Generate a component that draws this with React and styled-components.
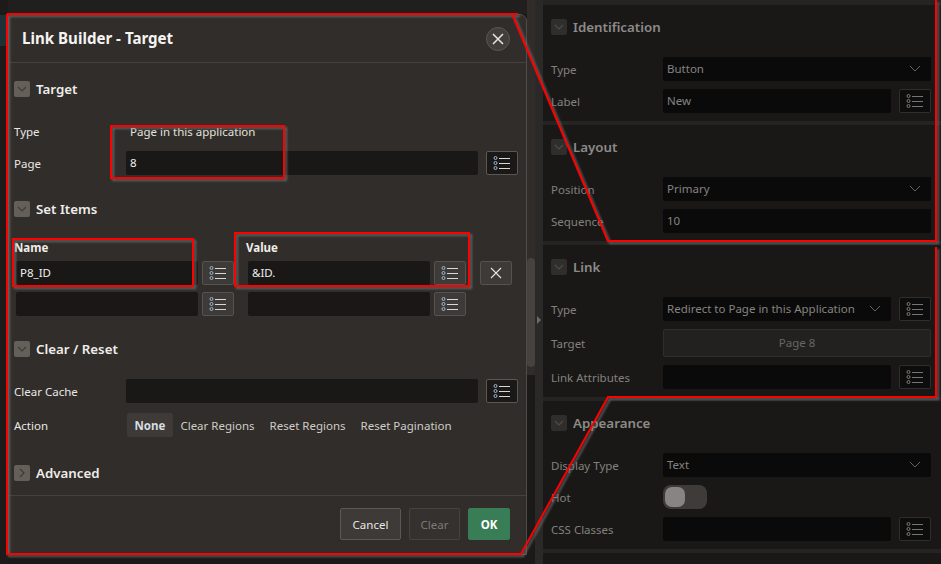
import React from "react";
import styled, { createGlobalStyle } from "styled-components";

const Global = createGlobalStyle`
  html, body { margin: 0; padding: 0; background: #1b1a19; overflow: hidden; }
  * { box-sizing: border-box; }
  #root { width: 941px; height: 564px; }
`;

const Page = styled.div`
  position: relative;
  display: flex;
  width: 941px;
  height: 564px;
  overflow: hidden;
  font-family: "Noto Sans", "Open Sans", sans-serif;
  font-size: 11.5px;
`;

const Rail = styled.div`
  width: 8px;
  display: flex;
  flex-direction: column;
  background: #1c1b1a;
`;
const RailTeal = styled.div`
  height: 31px;
  margin-top: 15px;
  background: #1d3136;
`;

const Workspace = styled.div`
  width: 519px;
  display: flex;
  flex-direction: column;
  padding-top: 14px;
  background: linear-gradient(#211f1e 14px, #1b1a19 14px);
`;

const Modal = styled.div`
  width: 519px;
  height: 541px;
  display: flex;
  flex-direction: column;
  background: #312d2a;
  border: 1px solid #4f4c49;
  border-top-right-radius: 7px;
  color: #f1efed;
`;
const ModalHeader = styled.header`
  height: 48px;
  flex: none;
  display: flex;
  align-items: center;
  justify-content: space-between;
  padding: 0 16px 0 13px;
  border-bottom: 1px solid #45413e;
`;
const ModalTitle = styled.h1`
  margin: 0 0 1px;
  font-size: 15.1px;
  font-weight: 700;
  color: #f5f4f2;
`;
const CloseButton = styled.div`
  width: 24px;
  height: 24px;
  border-radius: 50%;
  display: flex;
  align-items: center;
  justify-content: center;
  background: #423e3b;
  border: 1px solid #5a5653;
`;
const ModalBody = styled.div`
  flex: 1;
  display: flex;
  flex-direction: column;
  padding: 18px 8px 0 5px;
`;
const Block = styled.section`
  display: flex;
  flex-direction: column;
  margin-bottom: ${(p) => p.$after || 0}px;
`;
const Heading = styled.div`
  display: flex;
  align-items: center;
  gap: 6px;
  height: 16px;
  margin-bottom: ${(p) => (p.$flush ? 0 : 22)}px;
  font-size: 13.3px;
  font-weight: 600;
  color: ${(p) => (p.$dim ? "#8d8b88" : "#efedeb")};
`;
const Toggler = styled.span`
  width: 16px;
  height: 16px;
  flex: none;
  display: flex;
  align-items: center;
  justify-content: center;
  border-radius: 2px;
  background: ${(p) => (p.$dim ? "#302e2c" : "#655f5a")};
  color: ${(p) => (p.$dim ? "#4e4b48" : "#3f3b38")};
`;
const Stack = styled.div`
  display: flex;
  flex-direction: column;
  gap: 8px;
`;
const Field = styled.div`
  display: flex;
  align-items: center;
  height: 24px;
`;
const ActionField = styled(Field)`
  margin-top: 2px;
`;
const FieldLabel = styled.div`
  width: 112px;
  flex: none;
  color: #e9e7e5;
`;
const ReadOnly = styled.div`
  padding: 1px 0 0 4px;
  color: #e4e2df;
`;
const Controls = styled.div`
  flex: 1;
  display: flex;
  gap: 8px;
`;
const Input = styled.div`
  flex: 1;
  min-width: 0;
  height: 24px;
  display: flex;
  align-items: center;
  padding: 0 4px 1px;
  border-radius: 2px;
  background: #191817;
  color: #f0eeec;
`;
const PopButton = styled.div`
  width: 32px;
  height: 24px;
  flex: none;
  display: flex;
  align-items: center;
  justify-content: center;
  border-radius: 2px;
  border: 1px solid ${(p) => (p.$dark ? "#5b5854" : "#56524f")};
  background: ${(p) => (p.$dark ? "#1a1918" : "#3d3a37")};
`;
const ItemsHead = styled.div`
  display: flex;
  gap: 14px;
  height: 22px;
  padding-top: 1px;
  font-weight: 700;
  color: #efedeb;
`;
const ItemsRows = styled.div`
  display: flex;
  flex-direction: column;
  gap: 7px;
  padding-left: 2px;
`;
const ItemsRow = styled.div`
  display: flex;
  gap: 14px;
`;
const Pair = styled.div`
  width: 218px;
  display: flex;
  gap: 4px;
`;
const ItemTitle = styled.div`
  width: 218px;
`;
const ActionSet = styled.div`
  display: flex;
  margin-left: 1px;
`;
const ActionOption = styled.div`
  height: 24px;
  display: flex;
  align-items: center;
  padding: 0 7.5px;
  border-radius: 2px;
  font-weight: ${(p) => (p.$on ? 700 : 400)};
  background: ${(p) => (p.$on ? "#3d3a37" : "transparent")};
  color: ${(p) => (p.$on ? "#d9dde2" : "#cfccc9")};
`;
const ModalFooter = styled.footer`
  flex: none;
  display: flex;
  justify-content: flex-end;
  gap: 8px;
  height: 59px;
  padding: 12px 16px 0 0;
  border-top: 1px solid #45413e;
`;
const FooterButton = styled.div`
  width: ${(p) => p.$w}px;
  height: 32px;
  display: flex;
  align-items: center;
  justify-content: center;
  border-radius: 2px;
  border: 1px solid ${(p) => p.$line};
  background: ${(p) => p.$bg};
  color: ${(p) => p.$fg};
  font-weight: ${(p) => (p.$bold ? 700 : 400)};
`;

const Gutter = styled.div`
  position: relative;
  width: 16px;
  display: flex;
  background: #2b2927;
`;
const GutterLeft = styled.div`
  width: 8px;
  background: linear-gradient(#2f2c29 375px, #1b1a19 375px);
`;
const Scrollbar = styled.div`
  position: absolute;
  left: 0;
  top: 258px;
  width: 8px;
  height: 109px;
  border-radius: 4px;
  background: #45423f;
`;
const SplitArrow = styled.div`
  position: absolute;
  left: 10px;
  top: 316px;
  border-left: 4px solid #6c6966;
  border-top: 4px solid transparent;
  border-bottom: 4px solid transparent;
`;

const Panel = styled.aside`
  width: 398px;
  display: flex;
  flex-direction: column;
  padding-top: 5px;
  background: #252422;
  color: #8a8885;
`;
const PanelSection = styled.section`
  flex: ${(p) => (p.$last ? 1 : "none")};
  padding: 14px 10px 8px 8px;
  margin-bottom: ${(p) => (p.$last ? 0 : 4)}px;
  background: #191817;
`;
const PanelLabel = styled.div`
  width: 112px;
  flex: none;
  color: #83817e;
`;
const PanelInput = styled.div`
  flex: 1;
  min-width: 0;
  height: 24px;
  display: flex;
  align-items: center;
  justify-content: space-between;
  padding: 0 9px 1px 4px;
  border-radius: 2px;
  background: #0b0a0a;
  color: #858380;
`;
const PanelPop = styled.div`
  width: 32px;
  height: 24px;
  flex: none;
  display: flex;
  align-items: center;
  justify-content: center;
  border-radius: 2px;
  border: 1px solid #2f2e2c;
  background: #0e0d0d;
`;
const LinkButton = styled.div`
  flex: 1;
  height: 28px;
  display: flex;
  align-items: center;
  justify-content: center;
  padding-bottom: 1px;
  border-radius: 2px;
  border: 1px solid #2f2e2c;
  background: #222120;
  color: #686663;
`;
const TallField = styled(Field)`
  height: 28px;
`;
const Switch = styled.div`
  width: 44px;
  height: 24px;
  padding: 2px;
  border-radius: 8px;
  background: #3f3b38;
`;
const Knob = styled.div`
  width: 20px;
  height: 20px;
  border-radius: 7px;
  background: #868584;
`;
const Annotations = styled.svg`
  position: absolute;
  inset: 0;
  width: 941px;
  height: 564px;
  pointer-events: none;
  filter: drop-shadow(2px 2px 1px rgba(125, 125, 125, 0.7));
`;

const Chevron = ({ dir = "down" }) => (
  <svg width="12" height="12" viewBox="0 0 12 12" fill="none" stroke="currentColor" strokeWidth="1.2">
    <path d={dir === "down" ? "M2 4l4 4 4-4" : "M4 2l4 4-4 4"} />
  </svg>
);
const SelectChevron = () => (
  <svg width="14" height="8" viewBox="0 0 14 8" fill="none" stroke="#64625f" strokeWidth="1">
    <path d="M2 1l5 5 5-5" />
  </svg>
);
const ListIcon = ({ dim }) => {
  const line = dim ? "#777572" : "#d8d8d8";
  const dot = dim ? "#7f7d7a" : "#9db8d4";
  return (
    <svg width="18" height="14" viewBox="0 0 18 14" fill="none">
      {[2, 7, 12].map((y) => (
        <g key={y}>
          <circle cx="2.5" cy={y} r="1.5" stroke={dot} strokeWidth="1" />
          <path d={`M6 ${y}.5H17`} stroke={line} strokeWidth="1" />
        </g>
      ))}
    </svg>
  );
};
const Cross = ({ size, weight = 1.1 }) => (
  <svg width={size} height={size} viewBox="0 0 12 12" fill="none" stroke="#e8e6e4" strokeWidth={weight}>
    <path d="M1 1l10 10M11 1L1 11" />
  </svg>
);

const ModalHeading = ({ children, closed }) => (
  <Heading $flush={closed}>
    <Toggler><Chevron dir={closed ? "right" : "down"} /></Toggler>
    {children}
  </Heading>
);
const PanelHeading = ({ children }) => (
  <Heading $dim>
    <Toggler $dim><Chevron /></Toggler>
    {children}
  </Heading>
);
const PF = ({ label, children }) => (
  <Field>
    <PanelLabel>{label}</PanelLabel>
    <Controls>{children}</Controls>
  </Field>
);
const Pop = () => <PanelPop><ListIcon dim /></PanelPop>;

export default function App() {
  return (
    <Page>
      <Global />
      <Rail><RailTeal /></Rail>
      <Workspace>
        <Modal>
          <ModalHeader>
            <ModalTitle>Link Builder - Target</ModalTitle>
            <CloseButton><Cross size={12} weight={1.5} /></CloseButton>
          </ModalHeader>
          <ModalBody>
            <Block $after={26}>
              <ModalHeading>Target</ModalHeading>
              <Stack>
                <Field><FieldLabel>Type</FieldLabel><ReadOnly>Page in this application</ReadOnly></Field>
                <Field>
                  <FieldLabel>Page</FieldLabel>
                  <Controls>
                    <Input>8</Input>
                    <PopButton $dark><ListIcon /></PopButton>
                  </Controls>
                </Field>
              </Stack>
            </Block>
            <Block $after={25}>
              <ModalHeading>Set Items</ModalHeading>
              <ItemsHead>
                <ItemTitle>Name</ItemTitle>
                <ItemTitle>Value</ItemTitle>
              </ItemsHead>
              <ItemsRows>
                <ItemsRow>
                  <Pair><Input>P8_ID</Input><PopButton><ListIcon /></PopButton></Pair>
                  <Pair><Input>&amp;ID.</Input><PopButton><ListIcon /></PopButton></Pair>
                  <PopButton><Cross size={12} /></PopButton>
                </ItemsRow>
                <ItemsRow>
                  <Pair><Input /><PopButton><ListIcon /></PopButton></Pair>
                  <Pair><Input /><PopButton><ListIcon /></PopButton></Pair>
                </ItemsRow>
              </ItemsRows>
            </Block>
            <Block $after={28}>
              <ModalHeading>Clear / Reset</ModalHeading>
              <Stack>
                <Field>
                  <FieldLabel>Clear Cache</FieldLabel>
                  <Controls>
                    <Input />
                    <PopButton $dark><ListIcon /></PopButton>
                  </Controls>
                </Field>
                <ActionField>
                  <FieldLabel>Action</FieldLabel>
                  <ActionSet>
                    <ActionOption $on>None</ActionOption>
                    <ActionOption>Clear Regions</ActionOption>
                    <ActionOption>Reset Regions</ActionOption>
                    <ActionOption>Reset Pagination</ActionOption>
                  </ActionSet>
                </ActionField>
              </Stack>
            </Block>
            <ModalHeading closed>Advanced</ModalHeading>
          </ModalBody>
          <ModalFooter>
            <FooterButton $w={61} $line="#5c5955" $bg="#3d3a37" $fg="#e8e6e4">Cancel</FooterButton>
            <FooterButton $w={51} $line="#45423f" $bg="#34312e" $fg="#7d7a77">Clear</FooterButton>
            <FooterButton $w={42} $line="#397d56" $bg="#397d56" $fg="#ffffff" $bold>OK</FooterButton>
          </ModalFooter>
        </Modal>
      </Workspace>
      <Gutter>
        <GutterLeft />
        <Scrollbar />
        <SplitArrow />
      </Gutter>
      <Panel>
        <PanelSection>
          <PanelHeading>Identification</PanelHeading>
          <Stack>
            <PF label="Type"><PanelInput>Button<SelectChevron /></PanelInput></PF>
            <PF label="Label"><PanelInput>New</PanelInput><Pop /></PF>
          </Stack>
        </PanelSection>
        <PanelSection>
          <PanelHeading>Layout</PanelHeading>
          <Stack>
            <PF label="Position"><PanelInput>Primary<SelectChevron /></PanelInput></PF>
            <PF label="Sequence"><PanelInput>10</PanelInput></PF>
          </Stack>
        </PanelSection>
        <PanelSection>
          <PanelHeading>Link</PanelHeading>
          <Stack>
            <PF label="Type"><PanelInput>Redirect to Page in this Application<SelectChevron /></PanelInput><Pop /></PF>
            <TallField>
              <PanelLabel>Target</PanelLabel>
              <LinkButton>Page 8</LinkButton>
            </TallField>
            <PF label="Link Attributes"><PanelInput /><Pop /></PF>
          </Stack>
        </PanelSection>
        <PanelSection>
          <PanelHeading>Appearance</PanelHeading>
          <Stack>
            <PF label="Display Type"><PanelInput>Text<SelectChevron /></PanelInput></PF>
            <PF label="Hot"><Switch><Knob /></Switch></PF>
            <PF label="CSS Classes"><PanelInput /><Pop /></PF>
          </Stack>
        </PanelSection>
        <PanelSection $last />
      </Panel>
      <Annotations viewBox="0 0 941 564" fill="none" stroke="#ff0000" strokeWidth="2" aria-hidden="true">
        <path d="M7 14H518M513 16L608 241H936V0" />
        <path d="M936 247V397H608L521 554H7V14" />
        <rect x="111" y="126" width="173" height="52" />
        <rect x="13" y="239" width="180" height="47" />
        <rect x="235" y="233" width="234" height="53" />
      </Annotations>
    </Page>
  );
}
